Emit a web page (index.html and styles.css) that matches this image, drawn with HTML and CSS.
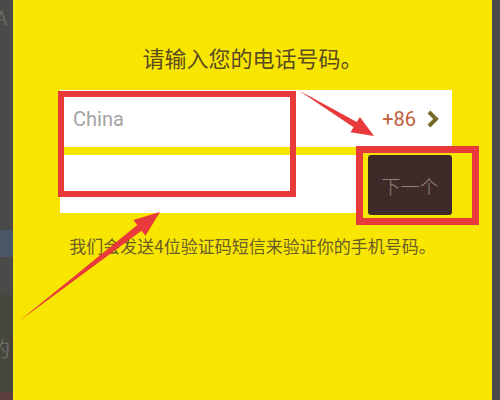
FILE: index.html
```html
<!DOCTYPE html>
<html lang="zh">
<head>
<meta charset="utf-8">
<link rel="stylesheet" href="styles.css">
</head>
<body>
<div class="screen">
  <div class="side side-left">
    <span class="ghost ghost-top">A</span>
    <span class="ghost-blue"></span>
    <div class="ghost-dark"><span class="ghost ghost-mid">的</span></div>
  </div>
  <main class="panel">
    <h1 class="title">请输入您的电话号码。</h1>
    <div class="form">
      <div class="row country">
        <span class="placeholder">China</span>
        <span class="code">+86</span>
        <svg class="chev" width="14" height="18" viewBox="0 0 14 18"><polyline points="3,2 10,9 3,16" fill="none" stroke="#7a6a28" stroke-width="4"/></svg>
      </div>
      <div class="row phone">
        <div class="phone-input"></div>
        <button class="next">下一个</button>
      </div>
    </div>
    <p class="note">我们会发送4位验证码短信来验证你的手机号码。</p>
  </main>
  <div class="side side-right"></div>
  <svg class="annot" width="500" height="400" viewBox="0 0 500 400">
    <rect x="61" y="94" width="232" height="100" fill="none" stroke="#e8393b" stroke-width="6"/>
    <rect x="359.5" y="149.5" width="116" height="72" fill="none" stroke="#e8393b" stroke-width="7"/>
    <polygon points="298,90 356.8,122 359.9,116.9 374,136 350.5,132.3 353.6,127.2" fill="#e8393b"/>
    <polygon points="18,322 137.3,225.1 133.3,220 160,212 145.5,235.8 141.5,230.7" fill="#e8393b"/>
  </svg>
</div>
</body>
</html>
```
FILE: styles.css
```css
html, body {
  margin: 0;
  padding: 0;
}
body {
  width: 500px;
  height: 400px;
  overflow: hidden;
  font-family: "Noto Sans CJK SC", "Noto Sans", sans-serif;
}
.screen {
  position: relative;
  display: flex;
  width: 500px;
  height: 400px;
}
.side {
  background: #4a4a48;
  flex: none;
}
.side-left {
  width: 13px;
  display: flex;
  flex-direction: column;
  overflow: hidden;
}
.ghost {
  color: #6d6d68;
  font-size: 18px;
  line-height: 1;
  white-space: nowrap;
}
.ghost-top {
  margin-top: 8px;
  margin-left: -4px;
}
.ghost-blue {
  display: block;
  height: 27px;
  margin-top: 204px;
  background: #4b5668;
}
.ghost-dark {
  flex: 1;
  margin-top: 38px;
  background: #46453c;
  border-bottom: 8px solid #5a3e3c;
}
.ghost-mid {
  display: block;
  margin-top: 44px;
  margin-left: -10px;
  font-size: 20px;
}
.side-right {
  width: 8px;
}
.panel {
  flex: 1;
  background: #f9e600;
  display: flex;
  flex-direction: column;
  align-items: center;
}
.title {
  margin: 37px 0 0;
  font-size: 22px;
  font-weight: 400;
  line-height: 40px;
  color: #5a4b20;
}
.form {
  width: 392px;
  margin: 13px 0 0 47px;
  align-self: flex-start;
  display: flex;
  flex-direction: column;
  gap: 8px;
}
.row {
  display: flex;
  align-items: center;
}
.country {
  height: 57px;
  background: #ffffff;
  padding: 0 12px 0 13px;
}
.placeholder {
  flex: 1;
  font-size: 20px;
  color: #a3a3a3;
  font-family: "Roboto", "Noto Sans", sans-serif;
}
.code {
  font-size: 20px;
  color: #c0603c;
  font-family: "Roboto", "Noto Sans", sans-serif;
  margin-right: 10px;
}
.chev {
  display: block;
}
.phone {
  height: 60px;
  align-items: stretch;
  gap: 8px;
}
.phone-input {
  flex: 1;
  height: 58px;
  background: #ffffff;
}
.next {
  width: 84px;
  border: 0;
  border-radius: 3px;
  background: #3e2b29;
  color: #8f837c;
  font-family: "Noto Sans CJK SC", sans-serif;
  font-size: 19px;
  font-weight: 300;
  padding: 0;
}
.note {
  margin: 19px 0 0;
  font-size: 17px;
  line-height: 24px;
  color: #6a5e28;
}
.annot {
  position: absolute;
  left: 0;
  top: 0;
  pointer-events: none;
}
```
